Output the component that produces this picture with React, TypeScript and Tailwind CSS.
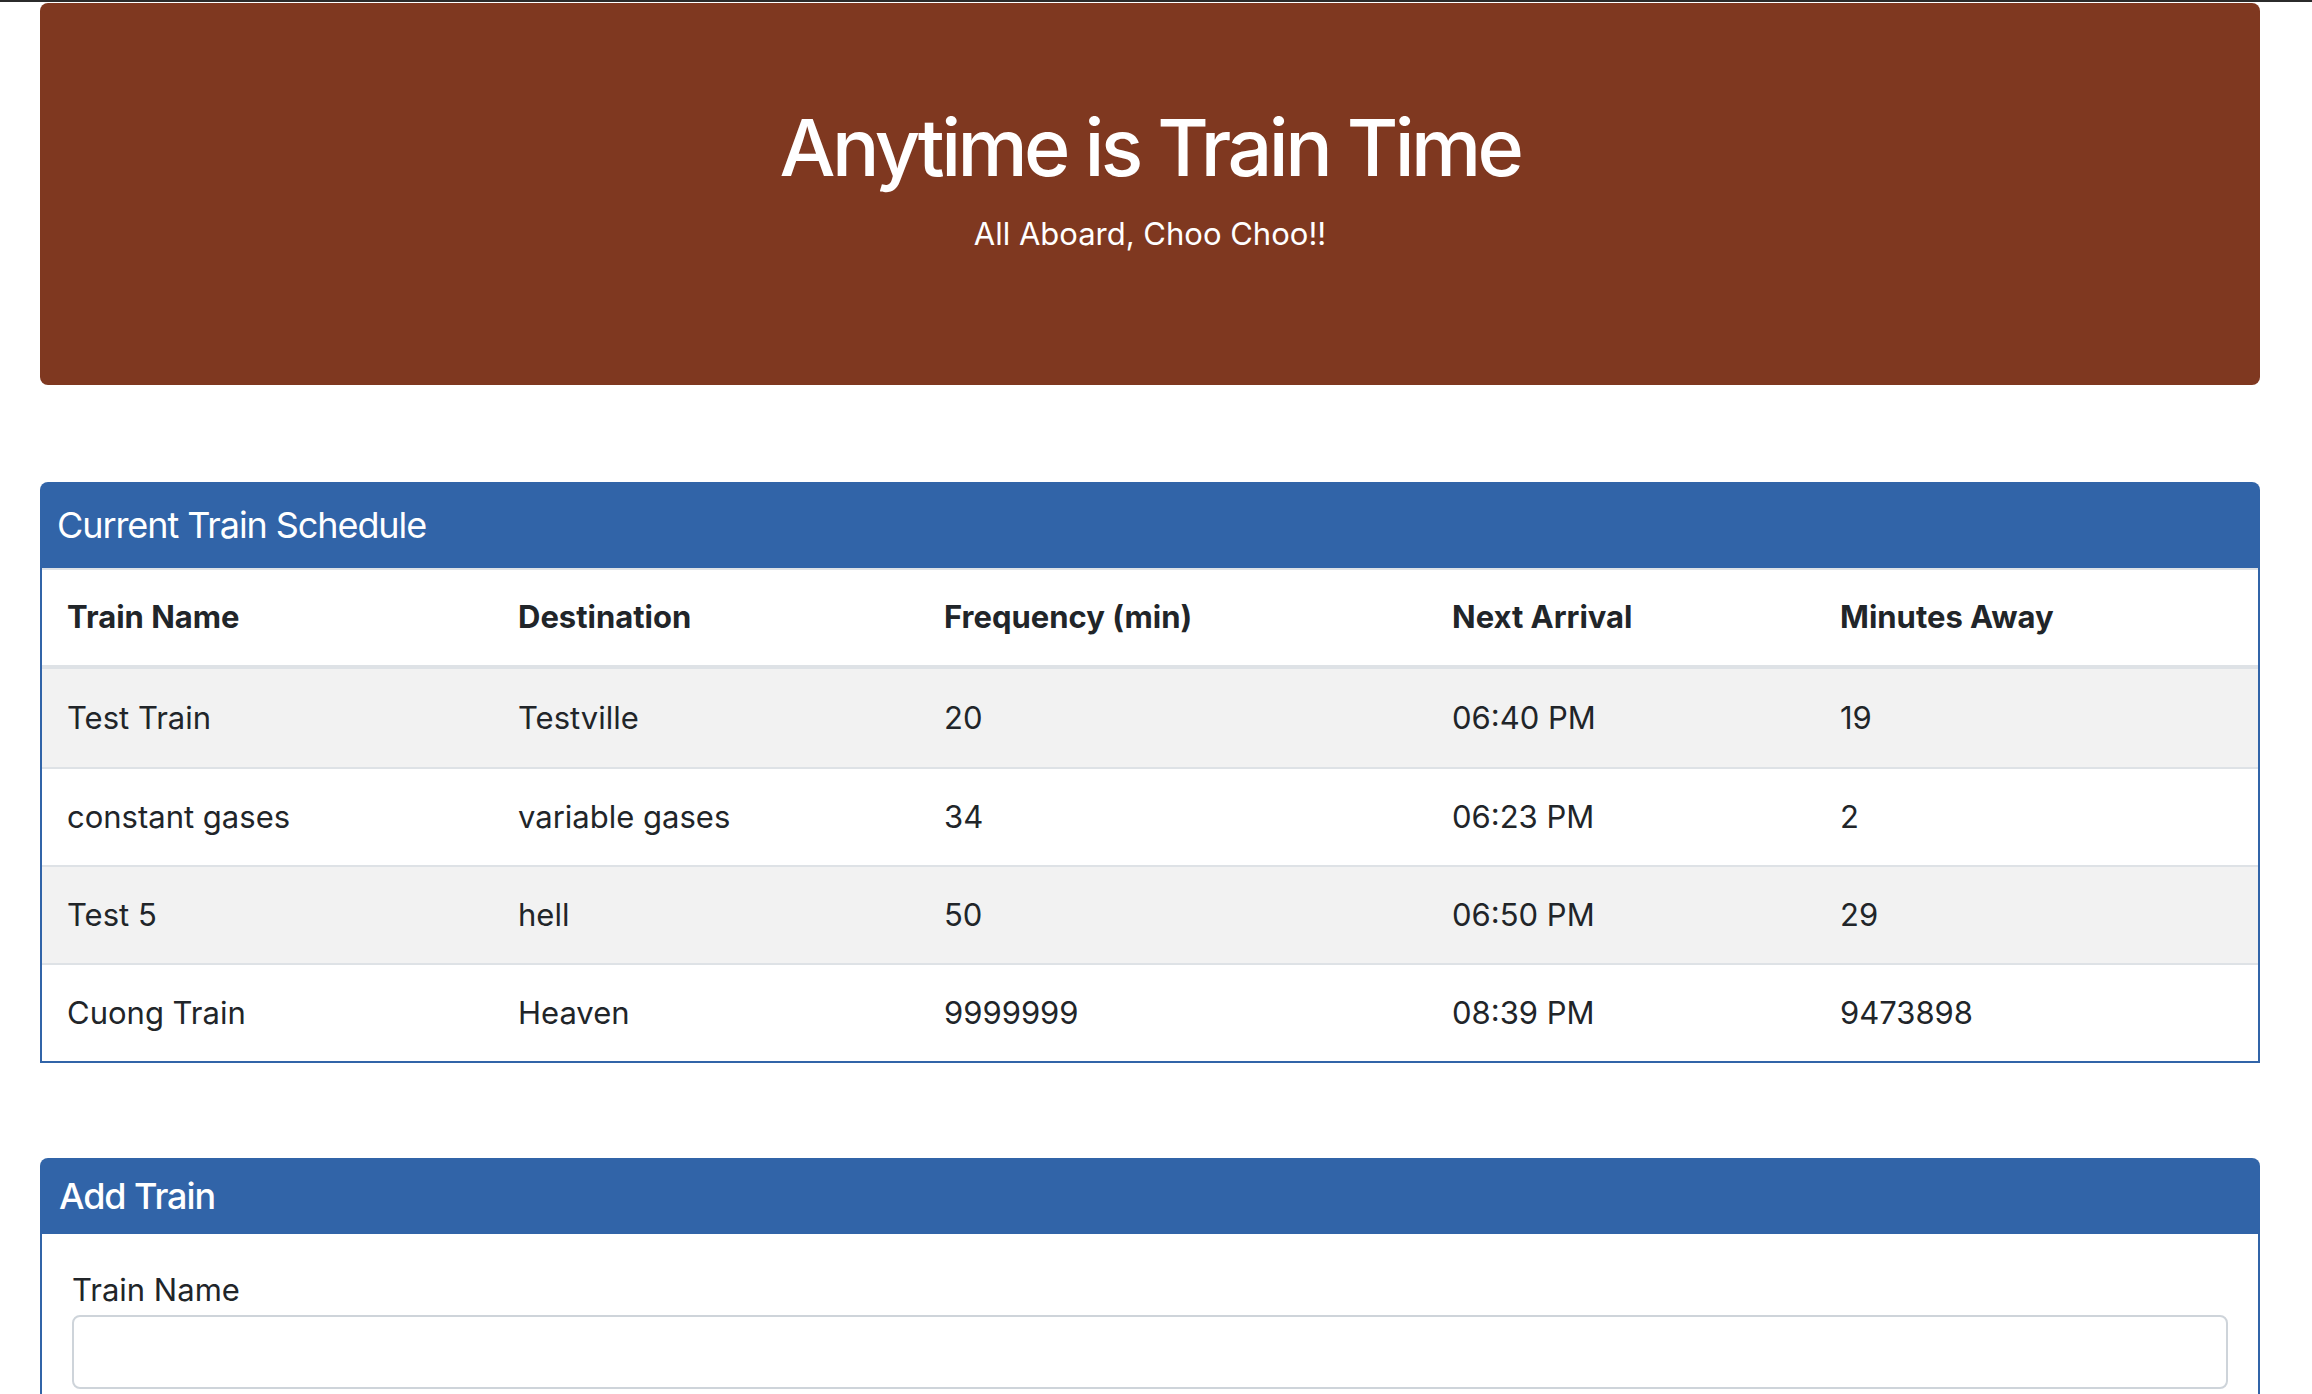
import React from "react";

type Train = {
  name: string;
  destination: string;
  frequency: string;
  next: string;
  away: string;
};

const trains: Train[] = [
  { name: "Test Train", destination: "Testville", frequency: "20", next: "06:40 PM", away: "19" },
  { name: "constant gases", destination: "variable gases", frequency: "34", next: "06:23 PM", away: "2" },
  { name: "Test 5", destination: "hell", frequency: "50", next: "06:50 PM", away: "29" },
  { name: "Cuong Train", destination: "Heaven", frequency: "9999999", next: "08:39 PM", away: "9473898" },
];

const cols = "grid grid-cols-[451px_426px_508px_388px_1fr] items-center";

export default function App() {
  return (
    <div className="min-h-screen bg-white font-['Inter','Liberation_Sans',sans-serif] text-[#212529]">
      <div className="h-[2px] bg-[#2b2b2b]" />
      <div className="pl-[40px] pr-[52px]">
        {/* jumbotron */}
        <div className="mt-[1px] flex h-[382px] flex-col items-center rounded-[8px] bg-[#7f3820] text-white">
          <h1 className="mt-[96px] text-[79px] font-medium leading-[96px] tracking-[-0.045em]">
            Anytime is Train Time
          </h1>
          <p className="mt-[16px] text-[31px] leading-[46px]">All Aboard, Choo Choo!!</p>
        </div>

        {/* schedule */}
        <div className="mt-[97px]">
          <div className="flex h-[86px] items-center rounded-t-[8px] bg-[#3164a8] pl-[17px] text-[36px] tracking-[-0.03em] text-white">
            Current Train Schedule
          </div>
          <div className="border-x-2 border-b-2 border-[#3164a8] text-[31px]">
            <div className={`${cols} h-[101px] border-t-2 border-b-4 border-[#dee2e6] font-bold`}>
              <div className="pl-[25px]">Train Name</div>
              <div className="pl-[25px]">Destination</div>
              <div className="pl-[25px]">Frequency (min)</div>
              <div className="pl-[25px]">Next Arrival</div>
              <div className="pl-[25px]">Minutes Away</div>
            </div>
            {trains.map((t, i) => (
              <div
                key={t.name}
                className={`${cols} h-[98px] ${i === 0 ? "" : "border-t-2 border-[#dee2e6]"} ${
                  i % 2 === 0 ? "bg-[#f2f2f2]" : "bg-white"
                }`}
              >
                <div className="pl-[25px]">{t.name}</div>
                <div className="pl-[25px]">{t.destination}</div>
                <div className="pl-[25px]">{t.frequency}</div>
                <div className="pl-[25px]">{t.next}</div>
                <div className="pl-[25px]">{t.away}</div>
              </div>
            ))}
          </div>
        </div>

        {/* add train */}
        <div className="mt-[95px]">
          <div className="flex h-[76px] items-center rounded-t-[8px] bg-[#3164a8] pl-[19px] text-[36px] font-medium tracking-[-0.03em] text-white">
            Add Train
          </div>
          <div className="h-[200px] border-x-2 border-[#3164a8] px-[30px] pt-[33px]">
            <label className="block text-[31px] leading-[46px]">Train Name</label>
            <input className="mt-[2px] block h-[74px] w-full rounded-[8px] border-2 border-[#ced4da] bg-white px-[24px] text-[31px] outline-none" />
          </div>
        </div>
      </div>
    </div>
  );
}
